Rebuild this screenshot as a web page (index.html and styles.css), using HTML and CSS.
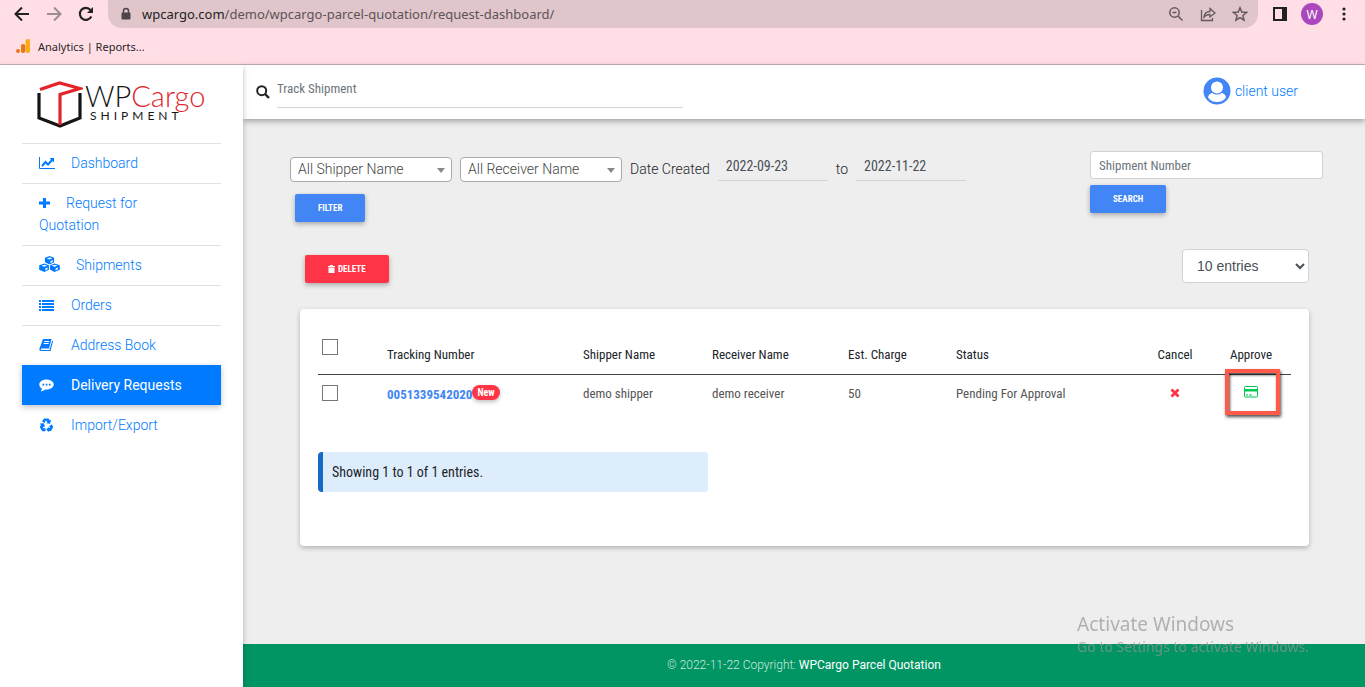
FILE: index.html
```html
<!DOCTYPE html>
<html lang="en">
  <head>
    <meta charset="UTF-8" />
    <meta name="viewport" content="width=device-width, initial-scale=1.0" />
    <title>Delivery Requests</title>
    <link rel="stylesheet" href="styles.css">
  </head>
  <body>
    <div class="browser">
      <div class="toolbar">
        <button class="tool" aria-label="Back">
          <svg width="20" height="20" viewBox="0 0 20 20" fill="none" stroke="#222" stroke-width="2"><path d="M17 10H4M10 3.500 3.500 10l6.500 6.500" /></svg>
        </button>
        <button class="tool" aria-label="Forward">
          <svg width="20" height="20" viewBox="0 0 20 20" fill="none" stroke="#9a8c92" stroke-width="2"><path d="M3 10h13M10 3.500 16.500 10 10 16.500" /></svg>
        </button>
        <button class="tool" aria-label="Reload">
          <svg width="20" height="20" viewBox="0 0 20 20"><path d="M15.300 12.500A6 6 0 1 1 14.500 6" fill="none" stroke="#222" stroke-width="2.200" /><path d="M17 3v6h-6z" fill="#222" /></svg>
        </button>
        <div class="address">
          <svg width="12" height="14" viewBox="0 0 12 14"><path d="M3.500 6V4a2.500 2.500 0 0 1 5 0v2" fill="none" stroke="#4c4549" stroke-width="1.500" /><rect x="1.500" y="5.500" width="9" height="7" rx="1" fill="#4c4549" /></svg>
          <span class="url">wpcargo.com<span>/demo/wpcargo-parcel-quotation/request-dashboard/</span></span>
          <button class="tool" aria-label="Zoom">
            <svg width="16" height="16" viewBox="0 0 16 16" fill="none" stroke="#645a5e" stroke-width="1.500"><circle cx="6.500" cy="6.500" r="4.700" /><path d="M10 10l4.500 4.500M4.500 6.500h4" /></svg>
          </button>
          <button class="tool" aria-label="Share">
            <svg width="16" height="16" viewBox="0 0 16 16" fill="none" stroke="#645a5e" stroke-width="1.300"><path d="M1.500 4v10.500h11V12" /><path d="M4 11c.5-4 3-5.500 6-5.500V2.500L15 7l-5 4V8.500C7.500 8.500 5.500 9 4 11z" /></svg>
          </button>
          <button class="tool" aria-label="Bookmark">
            <svg width="16" height="16" viewBox="0 0 16 16" fill="none" stroke="#645a5e" stroke-width="1.500"><path d="M8 1.800l1.800 4.300 4.700.4-3.600 3 1.100 4.600L8 11.700l-4 2.400 1.100-4.600-3.600-3 4.700-.4z" /></svg>
          </button>
        </div>
        <div class="window-tools">
          <button class="tool" aria-label="Side panel">
            <svg width="14" height="14" viewBox="0 0 14 14"><path d="M0 0h14v14H0zM2 2v10h7V2z" fill="#222" fill-rule="evenodd" /></svg>
          </button>
          <button class="profile">W</button>
          <button class="tool" aria-label="Menu">
            <svg width="14" height="14" viewBox="0 0 14 14" fill="#222"><circle cx="7" cy="2" r="1.600" /><circle cx="7" cy="7" r="1.600" /><circle cx="7" cy="12" r="1.600" /></svg>
          </button>
        </div>
      </div>
      <a class="bookmark" href="#">
        <svg width="14" height="14" viewBox="0 0 14 14"><rect x="9.500" width="4.500" height="14" rx="2" fill="#fbab13" /><rect x="5" y="5" width="4.200" height="9" rx="2" fill="#e8751a" /><circle cx="2" cy="12" r="2" fill="#e8751a" /></svg>
        Analytics | Reports...
      </a>
    </div>

    <div class="shell">
      <aside class="sidebar">
        <a class="logo" href="#">
          <svg width="46" height="50" viewBox="0 0 46 50" fill="none" stroke-width="3.200">
            <path d="M2 14v25l21 8 20-8V14" stroke="#151515" />
            <path d="M3 10.500 22.500 4 43 9.500 23 15.500V46" stroke="#e3242b" />
          </svg>
          <span class="logo-text">
            <span class="logo-name">WP<span>Cargo</span></span>
            <span class="logo-sub">SHIPMENT</span>
          </span>
        </a>
        <nav class="menu">
          <a href="#"><svg width="16" height="14" viewBox="0 0 16 14" fill="none" stroke="currentColor"><path d="M.5 1v11.500H16" /><path d="M3 10l3.500-4 2.500 2.500 4.500-5" stroke-width="2" /><path d="M10.500 2H15v4.500z" fill="currentColor" stroke="none" /></svg>Dashboard</a>
          <a href="#"><svg width="11" height="14" viewBox="0 0 11 14"><path d="M4 2h3v3.500h4v3H7V12H4V8.500H0v-3h4z" fill="currentColor" /></svg>Request for Quotation</a>
          <a href="#"><svg width="21" height="16" viewBox="0 0 18 14"><g fill="currentColor"><path d="M9 0l4 1.500v4L9 7.500l-4-2v-4z" /><path d="M4.500 6.500l4 1.500v4l-4 2-4.500-2V8z" /><path d="M13.500 6.500L18 8v4l-4.500 2-4-2V8z" /></g><path d="M6.500 2L9 3l2.500-1L9 1.300zM2 8.500l2.500 1 2.500-1-2.500-.8zM11 8.500l2.500 1 2.500-1-2.500-.8zM9.800 4.500v1.700l2-1v-1.700zM5.300 11v1.700l2-1V10zM14.300 11v1.700l2-1V10z" fill="#fff" /></svg>Shipments</a>
          <a href="#"><svg width="16" height="14" viewBox="0 0 16 14"><path d="M0 2h2v2H0zM3 2h12v2H3zM0 5h2v2H0zM3 5h12v2H3zM0 8h2v2H0zM3 8h12v2H3zM0 11h2v2H0zM3 11h12v2H3z" fill="currentColor" /></svg>Orders</a>
          <a href="#"><svg width="16" height="14" viewBox="0 0 16 14"><path d="M4 1h8.500L10 10.500H2.500c-1 0-1 1.500 0 1.500h8l2.700-9.500.8.800L11.500 13H2C.5 13 0 11.800.5 10.500z" fill="currentColor" /><path d="M5.300 3.500h5M4.700 5.500h5" stroke="#fff" /></svg>Address Book</a>
          <a class="active" href="#"><svg width="16" height="14" viewBox="0 0 16 14"><path d="M7.500 1.500c4 0 7.200 2.200 7.200 5s-3.200 5-7.200 5l-1.300-.1C5 12.500 3 13.300 1.500 13.300c1-.8 1.400-1.600 1.300-2.800C1.100 9.500.3 8 .3 6.500c0-2.800 3.200-5 7.200-5z" fill="currentColor" /><path d="M3.500 5.700h1.700v1.700H3.500zM6.700 5.700h1.700v1.700H6.700zM9.900 5.700h1.700v1.700H9.900z" fill="#007bff" /></svg>Delivery Requests</a>
          <a href="#"><svg width="16" height="14" viewBox="0 0 16 14" fill="currentColor"><path d="M5 .5h4.500l1.500 2 1.200-.6L11 5.800l-3.800-.6 1.300-.7L7 2.300 5.500 5 3 3.500z" /><path d="M.8 5.500l4-.2L6.200 9l-1.300-.8-1 2H6.500v3H3.300L.7 9l1.300-2z" /><path d="M14.200 8.800L12 13H9.800v1.200L7.300 11.500l2.500-2.800V10h1.400l-1-2 2.600-1.500z" /></svg>Import/Export</a>
        </nav>
      </aside>

      <div class="page">
        <header class="topbar">
          <form class="track">
            <label for="track" aria-label="Track Shipment"><svg width="14" height="14" viewBox="0 0 14 14" fill="none" stroke="#222" stroke-width="2"><circle cx="5.700" cy="5.700" r="4.500" /><path d="M9 9l4 4" stroke-width="2.400" /></svg></label>
            <input type="text" id="track" placeholder="Track Shipment" />
          </form>
          <a class="user" href="#">
            <svg width="28" height="28" viewBox="0 0 28 28"><circle cx="14" cy="14" r="13.500" fill="#4285f4" /><circle cx="14" cy="10.500" r="6" fill="#fff" /><path d="M5 20.500c.5-3 2.500-4.500 4.500-4.500 2.500 2 6.500 2 9 0 2 0 4 1.500 4.500 4.500-4 6-14 6-18 0z" fill="#fff" /></svg>
            client user
          </a>
        </header>

        <main class="content">
          <div class="filters">
            <form class="filter-form">
              <div class="filter-row">
                <span class="picker"><select aria-label="Shipper"><option>All Shipper Name</option></select></span>
                <span class="picker"><select aria-label="Receiver"><option>All Receiver Name</option></select></span>
                <label for="date_from">Date Created</label>
                <input type="text" class="date" id="date_from" value="2022-09-23" />
                <label for="date_to">to</label>
                <input type="text" class="date" id="date_to" value="2022-11-22" />
              </div>
              <button type="submit" class="btn btn-filter">FILTER</button>
            </form>
            <form class="search-form">
              <input type="text" aria-label="Shipment Number" placeholder="Shipment Number" />
              <button type="submit" class="btn">SEARCH</button>
            </form>
          </div>

          <div class="actions">
            <button class="btn btn-delete"><svg width="7" height="8" viewBox="0 0 7 8"><path d="M0 1h2V0h3v1h2v1H0zM.5 2.500h6V8h-6z" fill="#fff" /></svg>DELETE</button>
            <select class="entries" aria-label="Entries per page"><option>10 entries</option></select>
          </div>

          <section class="card">
            <table class="requests">
              <colgroup>
                <col class="col-check" />
                <col class="col-number" />
                <col class="col-shipper" />
                <col class="col-receiver" />
                <col class="col-charge" />
                <col />
                <col class="col-cancel" />
                <col class="col-approve" />
              </colgroup>
              <thead>
                <tr>
                  <th><input type="checkbox" aria-label="Select all" /></th>
                  <th>Tracking Number</th>
                  <th>Shipper Name</th>
                  <th>Receiver Name</th>
                  <th>Est. Charge</th>
                  <th>Status</th>
                  <th class="center">Cancel</th>
                  <th class="center">Approve</th>
                </tr>
              </thead>
              <tbody>
                <tr>
                  <td><input type="checkbox" aria-label="Select 0051339542020" /></td>
                  <td><a class="number" href="#">0051339542020</a><span class="badge">New</span></td>
                  <td>demo shipper</td>
                  <td>demo receiver</td>
                  <td>50</td>
                  <td>Pending For Approval</td>
                  <td class="center"><button class="icon-btn" aria-label="Cancel"><svg width="10" height="10" viewBox="0 0 10 10"><path d="M1.500 1.500l7 7M8.500 1.500l-7 7" stroke="#ff3547" stroke-width="2.800" /></svg></button></td>
                  <td class="center approve"><button class="icon-btn" aria-label="Approve"><svg width="14" height="12" viewBox="0 0 14 12"><rect x=".5" y=".5" width="13" height="10.500" rx="1" fill="none" stroke="#00c851" /><path d="M0 3h14v2.500H0zM2 8.500h2v1H2zM5 8.500h3v1H5z" fill="#00c851" /></svg></button><span class="highlight"></span></td>
                </tr>
              </tbody>
            </table>
            <p class="note">Showing 1 to 1 of 1 entries.</p>
          </section>
        </main>

        <footer class="footer">© 2022-11-22 Copyright: <a href="#">WPCargo Parcel Quotation</a></footer>
      </div>
    </div>

    <div class="watermark">
      <div class="watermark-title">Activate Windows</div>
      <div>Go to Settings to activate Windows.</div>
    </div>
  </body>
</html>
```
FILE: styles.css
```css
:root {
  --condensed: 'Roboto Condensed', 'Liberation Sans Narrow', Roboto, sans-serif;
  --blue: #4285f4;
  --link: #007bff;
}
* {
  box-sizing: border-box;
}
body {
  margin: 0;
  min-height: 100vh;
  display: flex;
  flex-direction: column;
  font-family: Roboto, sans-serif;
  font-size: 14px;
  font-weight: 300;
  color: #212529;
  background: #eee;
}
a {
  color: var(--link);
  text-decoration: none;
}
button,
input,
select {
  font: inherit;
  color: inherit;
}
svg {
  flex: none;
}

/* Browser bar */
.browser {
  height: 65px;
  background: #ffdfe5;
  border-bottom: 1px solid #c9b1b7;
  font-family: 'Noto Sans', sans-serif;
  font-weight: 400;
}
.toolbar {
  display: flex;
  align-items: center;
  gap: 12px;
  padding: 0 14px 0 12px;
}
.window-tools {
  display: flex;
  align-items: center;
  gap: 14px;
  padding-left: 3px;
}
.tool {
  display: flex;
  padding: 0;
  border: 0;
  background: none;
}
.address {
  flex: 1;
  height: 28px;
  display: flex;
  align-items: center;
  gap: 16px;
  padding: 0 10px 0 12px;
  border-radius: 0 0 14px 14px;
  background: #e0c5ca;
  font-size: 13px;
}
.url {
  flex: 1;
  margin-left: -6px;
  color: #222;
}
.url span {
  color: #5d5357;
}
.profile {
  width: 22px;
  height: 22px;
  padding: 0;
  border: 0;
  border-radius: 50%;
  background: #ab47bc;
  color: #fff;
  font-size: 12px;
}
.bookmark {
  display: flex;
  align-items: center;
  gap: 8px;
  height: 36px;
  padding: 0 16px;
  color: #2b2528;
  font-size: 11px;
}

/* Layout */
.shell {
  flex: 1;
  display: flex;
}
.sidebar {
  width: 243px;
  flex: none;
  padding: 0 22px;
  background: #fff;
  box-shadow: 0 2px 6px rgba(0, 0, 0, 0.25);
  z-index: 1;
}
.page {
  flex: 1;
  min-width: 0;
  display: flex;
  flex-direction: column;
}

/* Sidebar */
.logo {
  height: 78px;
  display: flex;
  align-items: center;
  gap: 2px;
  padding-left: 15px;
  color: #151515;
}
.logo-text {
  padding-bottom: 4px;
  font-family: Lato, sans-serif;
  font-weight: 300;
}
.logo-name,
.logo-sub {
  display: block;
}
.logo-name {
  font-size: 29px;
  line-height: 28px;
}
.logo-name span {
  color: #e3242b;
}
.logo-sub {
  padding-left: 5px;
  font-size: 12px;
  line-height: 12px;
  letter-spacing: 4px;
  font-weight: 400;
}
.menu a {
  display: block;
  padding: 8px 44px 9px 17px;
  border-top: 1px solid #dee2e6;
  line-height: 22px;
}
.menu svg {
  margin-right: 16px;
  vertical-align: -2px;
}
.menu .active {
  padding-right: 17px;
  background: var(--link);
  border-color: var(--link);
  color: #fff;
  font-weight: 400;
  box-shadow: 0 2px 6px rgba(0, 0, 0, 0.25);
}
.menu .active + a {
  border-color: transparent;
}

/* Top bar */
.topbar {
  height: 54px;
  display: flex;
  justify-content: space-between;
  padding: 0 67px 0 13px;
  background: #fff;
  box-shadow: 0 2px 6px rgba(0, 0, 0, 0.35);
}
.track {
  display: flex;
  align-items: center;
  gap: 7px;
  width: 427px;
}
.track label {
  display: flex;
}
.track input {
  flex: 1;
  height: 37px;
  padding: 0;
  margin-bottom: 6px;
  border: 0;
  border-bottom: 1px solid #ced4da;
  background: none;
  font-family: var(--condensed);
  font-size: 13px;
  font-weight: 400;
}
::placeholder {
  color: #6c757d;
  opacity: 1;
}
.user {
  display: flex;
  align-items: center;
  gap: 4px;
  padding-bottom: 2px;
}

/* Filters */
.content {
  flex: 1;
  padding: 32px 42px 0 47px;
}
.filters,
.actions {
  display: flex;
  justify-content: space-between;
}
.filter-row {
  display: flex;
  align-items: center;
  gap: 8px;
  height: 36px;
}
.picker {
  position: relative;
}
.picker::after {
  content: '';
  position: absolute;
  right: 7px;
  top: 11px;
  border: 4px solid transparent;
  border-top: 5px solid #888;
  pointer-events: none;
}
.picker select {
  appearance: none;
  display: block;
  width: 162px;
  height: 25px;
  padding: 0 7px;
  border: 1px solid #aaa;
  border-radius: 4px;
  background: #fff;
  color: #444;
}
.date {
  align-self: flex-start;
  width: 110px;
  height: 30px;
  padding: 0 8px;
  border: 0;
  border-bottom: 1px solid #ced4da;
  background: none;
  color: #495057;
  font-family: var(--condensed);
  font-weight: 400;
}
.btn {
  height: 28px;
  padding: 0 23px;
  border: 0;
  border-radius: 2px;
  background: var(--blue);
  color: #fff;
  font-family: var(--condensed);
  font-size: 9px;
  font-weight: 700;
  box-shadow: 0 2px 5px rgba(0, 0, 0, 0.3);
}
.btn-filter {
  margin: 7px 0 0 5px;
}
.search-form {
  width: 233px;
}
.search-form input {
  display: block;
  width: 100%;
  height: 28px;
  margin-bottom: 6px;
  padding: 0 8px;
  border: 1px solid #ced4da;
  border-radius: 3px;
  background: #fff;
  font-family: var(--condensed);
  font-size: 13px;
  font-weight: 400;
}
.actions {
  align-items: flex-end;
  margin-top: 27px;
  padding: 0 14px 0 15px;
}
.btn-delete {
  display: flex;
  align-items: center;
  gap: 3px;
  background: #ff3547;
}
.entries {
  width: 127px;
  height: 34px;
  padding: 0 10px;
  border: 1px solid #ced4da;
  border-radius: 4px;
  background: #fff;
  color: #495057;
  font-family: 'Liberation Sans', sans-serif;
  font-weight: 400;
}

/* Requests */
.card {
  margin: 26px 14px 0 10px;
  padding: 27px 18px 54px;
  border-radius: 4px;
  background: #fff;
  box-shadow: 0 2px 5px rgba(0, 0, 0, 0.25);
}
.requests {
  width: 100%;
  table-layout: fixed;
  border-collapse: collapse;
  font-family: var(--condensed);
  font-size: 13px;
  font-weight: 400;
  text-align: left;
}
.col-check { width: 65px; }
.col-number { width: 196px; }
.col-shipper { width: 129px; }
.col-receiver { width: 136px; }
.col-charge { width: 108px; }
.col-cancel { width: 72px; }
.col-approve { width: 80px; }
.requests th,
.requests td {
  height: 38px;
  padding: 0 4px;
}
.requests th {
  border-bottom: 1px solid #444;
  font-weight: 400;
}
.requests td {
  color: #555;
}
.requests .center {
  text-align: center;
}
.requests input {
  appearance: none;
  display: block;
  width: 16px;
  height: 16px;
  margin: 0;
  border: 1px solid #767676;
  background: #fff;
}
.requests th input {
  margin-bottom: 16px;
}
.number {
  color: var(--blue);
  font-weight: 700;
}
.badge {
  display: inline-block;
  padding: 0 5px;
  border-radius: 8px;
  background: #ff3547;
  color: #fff;
  font-size: 10px;
  font-weight: 700;
  line-height: 15px;
  vertical-align: 3px;
  box-shadow: 0 2px 4px rgba(0, 0, 0, 0.25);
}
.icon-btn {
  padding: 0;
  border: 0;
  background: none;
}
.icon-btn svg {
  display: block;
}
.approve {
  position: relative;
}
.highlight {
  position: absolute;
  left: 14px;
  top: -6px;
  width: 55px;
  height: 46px;
  border: 4px solid #ff5a4a;
  box-shadow: 1px 2px 3px rgba(0, 0, 0, 0.7), inset 1px 2px 3px rgba(0, 0, 0, 0.7);
  pointer-events: none;
}
.note {
  width: 390px;
  max-width: 100%;
  margin: 40px 0 0;
  padding: 0 9px;
  border-left: 5px solid #1769c6;
  border-radius: 4px;
  background: #deedfc;
  font-family: var(--condensed);
  font-weight: 400;
  line-height: 40px;
}

.footer {
  height: 43px;
  background: #009563;
  color: rgba(255, 255, 255, 0.8);
  font-size: 12px;
  line-height: 43px;
  text-align: center;
}
.footer a {
  color: #fff;
  font-weight: 400;
}
.watermark {
  position: fixed;
  right: 56px;
  bottom: 30px;
  z-index: 2;
  color: rgba(150, 150, 150, 0.7);
  font-family: 'Noto Sans', sans-serif;
  font-size: 14px;
  font-weight: 400;
  line-height: 20px;
  pointer-events: none;
}
.watermark-title {
  font-size: 19px;
  line-height: 26px;
}
```
